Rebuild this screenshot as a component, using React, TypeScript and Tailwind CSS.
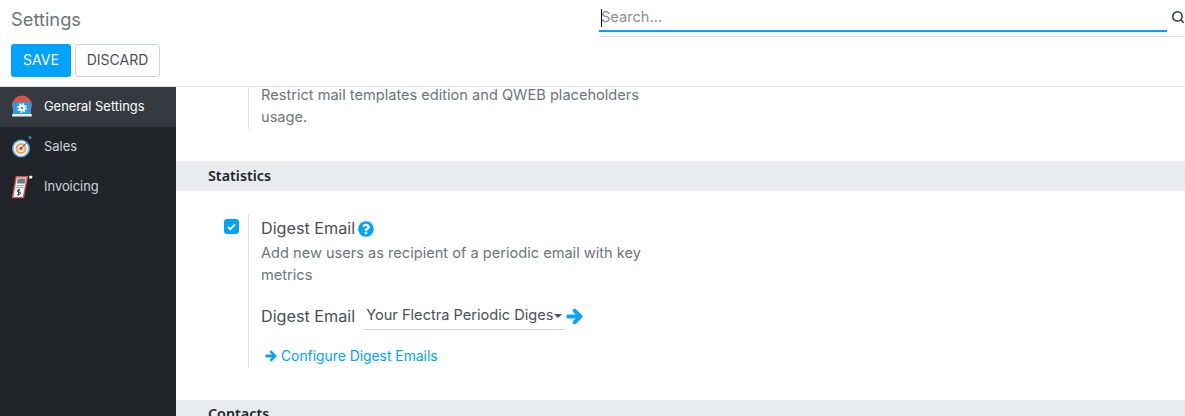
import { FaArrowRight, FaQuestionCircle } from "react-icons/fa";
import { Search } from "lucide-react";

function GeneralIcon() {
  return (
    <svg width="24" height="24" viewBox="0 0 24 24" className="block">
      <circle cx="12" cy="10.5" r="10" fill="#d9534a" />
      <rect x="3" y="7" width="18" height="12" fill="#2f9bdc" />
      <rect x="2" y="19" width="20" height="2.4" rx="1" fill="#e8edf2" />
      <circle cx="12" cy="13" r="2.3" fill="none" stroke="#fff" strokeWidth="2.2" />
      <circle cx="12" cy="13" r="4.2" fill="none" stroke="#fff" strokeWidth="1.5" strokeDasharray="1.6 1.7" />
    </svg>
  );
}

function SalesIcon() {
  return (
    <svg width="24" height="24" viewBox="0 0 24 24" className="block">
      <circle cx="11" cy="13.5" r="9" fill="#5db0e4" />
      <circle cx="11" cy="13.5" r="7.4" fill="#f7f3e8" />
      <circle cx="11" cy="13.5" r="5.4" fill="#f0a04b" />
      <circle cx="11" cy="13.5" r="3.6" fill="#e6ecf1" />
      <circle cx="11" cy="13.5" r="1.7" fill="#d9534a" />
      <path d="M11 13.5 L17 7.5" stroke="#34495e" strokeWidth="1" />
      <circle cx="20" cy="2.5" r="1.5" fill="#1e88d2" />
    </svg>
  );
}

function InvoiceIcon() {
  return (
    <svg width="24" height="24" viewBox="0 0 24 24" className="block">
      <path d="M6.3 1.7 H17.4 L13.4 22.6 H2.6 Z" fill="#f4f6f8" stroke="#d9534a" strokeWidth="1.4" />
      <path d="M7.8 3.6 H15.6 L14.8 8.4 H6.9 Z" fill="#6f7d88" />
      <path d="M6.6 10.5 H14 M6.2 12.5 H13.6" stroke="#9aa7b2" strokeWidth="1" />
      <path d="M10 14.8 q-2.6 -.3 -2.6 1.2 q0 1 1.7 1.2 q1.8 .3 1.4 1.5 q-.5 1.1 -2.8 .6 M9.2 14 L8.2 20.8" stroke="#26323b" strokeWidth="1" fill="none" />
      <path d="M19.5 .8 H22.5 L22 3.6 H19 Z" fill="#f4f6f8" />
    </svg>
  );
}

function SideItem({ icon, label, active }: { icon: React.ReactNode; label: string; active?: boolean }) {
  return (
    <div className={`flex h-10 items-center ${active ? "bg-[#343a40] text-white" : "text-[#ced4da]"}`}>
      <div className="ml-[10px] mr-[10px] h-6 w-6">{icon}</div>
      <span className="text-[12.9px]">{label}</span>
    </div>
  );
}

export default function App() {
  return (
    <div className="flex h-[416px] w-[1185px] flex-col overflow-hidden bg-white font-['Inter',sans-serif] text-[#495057]">
      <header className="flex h-[87px] shrink-0 flex-col border-b border-[#dee2e6] pl-[11px]">
        <div className="flex h-[44px] shrink-0">
          <h1 className="mt-[8px] w-[588px] shrink-0 text-[18.3px] leading-[22px] text-[#6c757d]">Settings</h1>
          <div className="min-w-0 flex-1">
            <div className="flex h-[37px] border-b border-[#dee2e6]">
              <div className="flex h-[32px] w-[568px] shrink-0 items-center border-b-2 border-[#00a2ff] pl-[2px] pt-[5px] text-[14.6px] text-[#8f8f8f]">
                <span className="mr-[-1px] h-[18px] w-px bg-black" />
                Search...
              </div>
              <Search className="ml-[4px] mt-[10px] h-[14px] w-[14px] shrink-0 text-[#343a40]" strokeWidth={2.6} />
            </div>
          </div>
        </div>
        <div className="flex gap-1">
          <button className="h-[33px] w-[60px] rounded-[3px] bg-[#00a2ff] pb-[2px] text-[14px] text-white">SAVE</button>
          <button className="h-[33px] w-[85px] rounded-[3px] border border-[#ced4da] bg-white pb-[2px] text-[14px] text-[#495057]">DISCARD</button>
        </div>
      </header>

      <div className="flex min-h-0 flex-1">
        <nav className="w-[176px] shrink-0 bg-[#212529]">
          <SideItem icon={<GeneralIcon />} label="General Settings" active />
          <SideItem icon={<SalesIcon />} label="Sales" />
          <SideItem icon={<InvoiceIcon />} label="Invoicing" />
        </nav>

        <main className="min-w-0 flex-1">
          <div className="ml-[72px] flow-root h-[42px] w-[400px] border-l border-[#dee2e6] pl-3 text-[14.6px] leading-[22px] text-[#6c757d]">
            <p className="-mt-[3px]">Restrict mail templates edition and QWEB placeholders usage.</p>
          </div>

          <div className="mt-[32px] flex h-[30px] items-center bg-[#e9ecef] pb-px pl-8 font-['Noto_Sans',sans-serif] text-[14.3px] font-semibold text-[#212529]">
            Statistics
          </div>

          <div className="mt-[23px] flex h-[154px]">
            <div className="ml-[48px] mt-[5px] flex h-[15px] w-[15px] items-center justify-center rounded-[3px] bg-[#00a2ff]">
              <svg width="9" height="8" viewBox="0 0 9 8">
                <path d="M1 4 L3.4 6.2 L8 1.4" fill="none" stroke="#fff" strokeWidth="1.8" />
              </svg>
            </div>
            <div className="ml-[9px] w-[400px] border-l border-[#dee2e6] pl-3">
              <div className="flex h-[28px] items-center gap-[3px] pt-px text-[16.2px] text-[#495057]">
                Digest Email <FaQuestionCircle className="h-4 w-4 text-[#00a2ff]" />
              </div>
              <p className="text-[14.6px] leading-[22px] text-[#6c757d]">
                Add new users as recipient of a periodic email with key metrics
              </p>
              <div className="mt-[16px] flex h-[28px] items-center text-[16.2px]">
                <span>Digest Email</span>
                <div className="ml-2 flex h-[28px] w-[202px] items-center overflow-hidden border-b border-[#ced4da] pl-[3px] text-[14.6px]">
                  <span className="w-[187px] overflow-hidden whitespace-nowrap">Your Flectra Periodic Digest</span>
                  <span className="ml-[1px] h-0 w-0 border-x-[4px] border-t-[4px] border-x-transparent border-t-[#495057]" />
                </div>
                <FaArrowRight className="ml-[1px] h-[17px] w-[17px] text-[#00a2ff]" stroke="currentColor" strokeWidth={40} />
              </div>
              <div className="mt-[16px] flex items-center text-[13.85px] text-[#00a2ff]">
                <FaArrowRight className="ml-[4px] h-[12px] w-[12px]" stroke="currentColor" strokeWidth={40} />
                <span className="ml-[4px]">Configure Digest Emails</span>
              </div>
            </div>
          </div>

          <div className="mt-[32px] h-[30px] bg-[#e9ecef] pl-8 pt-[3px] font-['Noto_Sans',sans-serif] text-[14.3px] font-semibold text-[#212529]">
            Contacts
          </div>
        </main>
      </div>
    </div>
  );
}
